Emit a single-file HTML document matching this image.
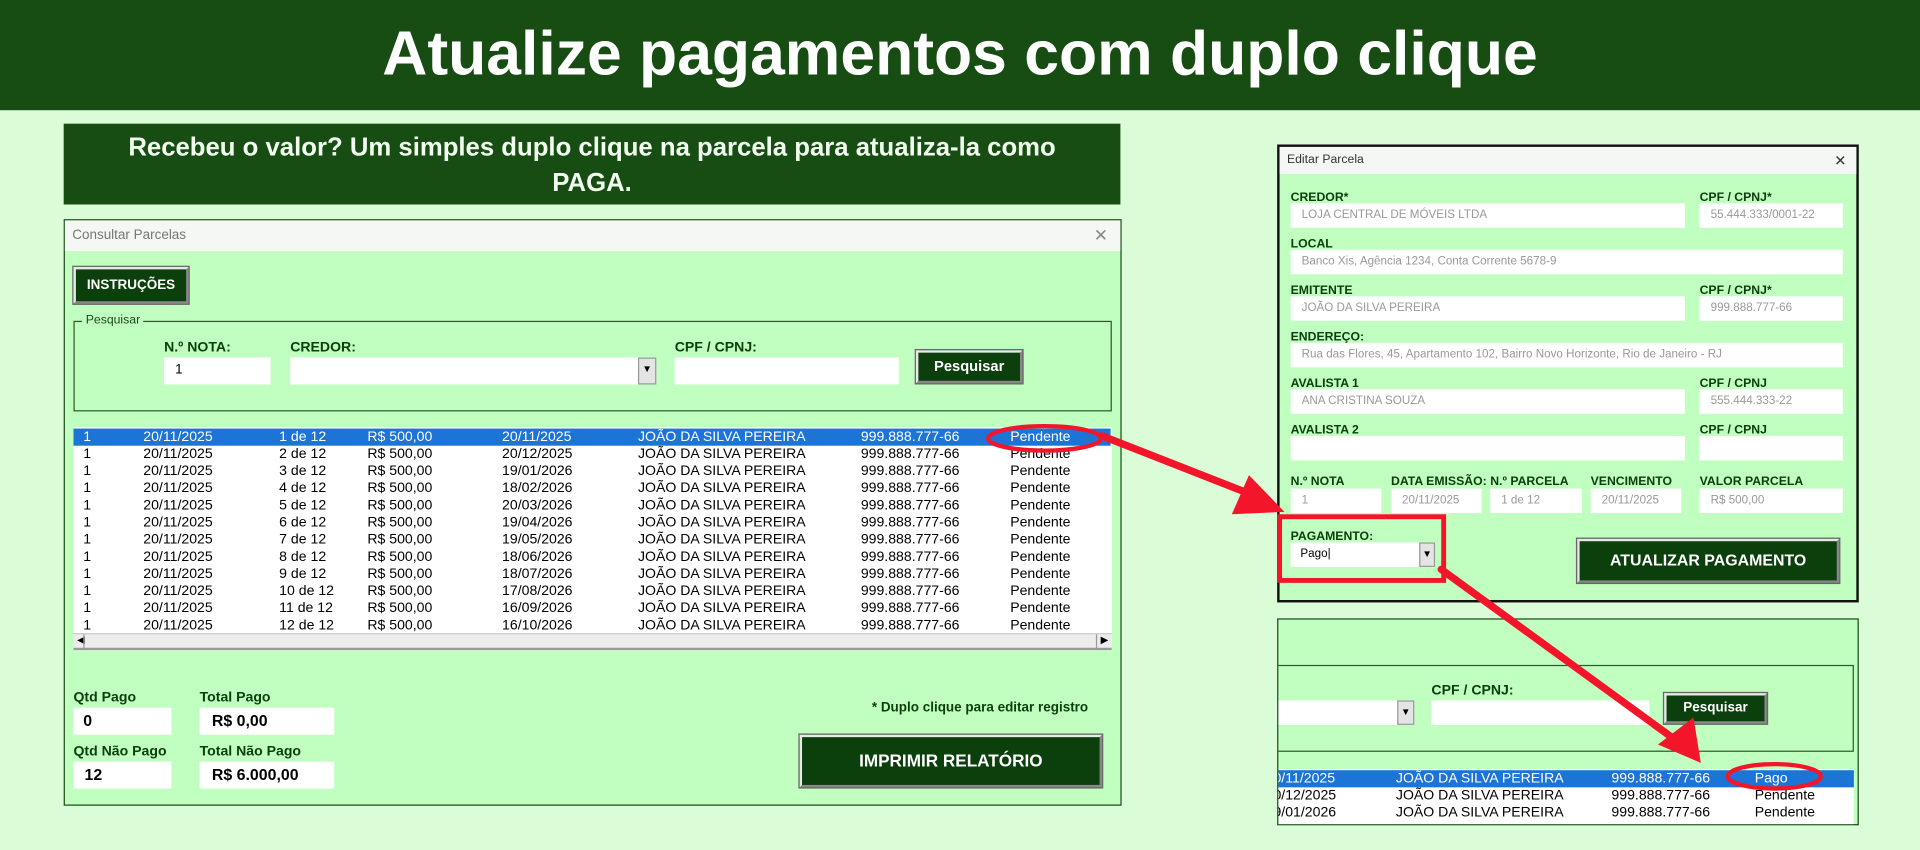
<!DOCTYPE html>
<html><head><meta charset="utf-8">
<style>
*{margin:0;padding:0;box-sizing:border-box}
html,body{width:1920px;height:850px;overflow:hidden;background:#dafcd7}
#r{position:absolute;left:0;top:0;width:1568px;height:694px;transform-origin:0 0;transform:scale(1.22449);font-family:"Liberation Sans",sans-serif}
.a{position:absolute}
.hdr{left:0;top:0;width:1568px;height:90px;background:#174d13;color:#fff;font-weight:bold;font-size:51px;text-align:center;line-height:88px}
.sub{left:52px;top:101px;width:863px;height:66px;background:#174d13;color:#f2fff0;font-weight:bold;font-size:21px;text-align:center;line-height:29px;padding-top:5px}
.frm{border:1px solid #1d4a1a;background:#c0ffc0}
.tb{position:absolute;left:0;top:0;right:0;background:#f4f7f4;color:#777;font-size:11px;padding-left:6px}
.lbl{position:absolute;color:#0c3d0c;font-weight:bold;font-size:11.5px;white-space:nowrap}
.in{position:absolute;background:#fff}
.btn{position:absolute;background:#0b3f0b;color:#fff;font-weight:bold;text-align:center;border:2px solid #e8e8e8;border-right-color:#888;border-bottom-color:#888;outline:1px solid #666}
.dd{position:absolute;background:#e4e4e4;border:1px solid #999;font-size:8px;text-align:center;line-height:18px}
.g{color:#999;font-size:9.5px;padding:4px 0 0 9px;white-space:nowrap}
.row{position:absolute;left:0;width:847px;height:14px;font-size:11.5px;line-height:15px;color:#000;white-space:nowrap}
.row span{position:absolute;top:0}
</style></head><body><div id="r">
<div class="a hdr">Atualize pagamentos com duplo clique</div>
<div class="a sub">Recebeu o valor? Um simples duplo clique na parcela para atualiza-la como<br>PAGA.</div>

<div class="a frm" style="left:52px;top:179px;width:864px;height:479px">
 <div class="tb" style="height:25px;line-height:25px">Consultar Parcelas<span style="position:absolute;right:10px;font-size:14px;color:#888">✕</span></div>
 <div class="btn" style="left:7px;top:38px;width:94px;height:30px;font-size:11px;line-height:26px">INSTRUÇÕES</div>
 <div class="a" style="left:7px;top:82px;width:848px;height:74px;border:1px solid #2e5a2a"></div>
 <div class="a" style="left:14px;top:76px;background:#c0ffc0;font-size:10px;color:#1b4a1b;padding:0 3px">Pesquisar</div>
 <div class="lbl" style="left:81px;top:98px">N.º NOTA:</div>
 <div class="in" style="left:81px;top:112px;width:87px;height:22px;font-size:11px;padding:4px 0 0 9px">1</div>
 <div class="lbl" style="left:184px;top:98px">CREDOR:</div>
 <div class="in" style="left:184px;top:112px;width:299px;height:22px"></div>
 <div class="dd" style="left:468px;top:112px;width:15px;height:22px">▼</div>
 <div class="lbl" style="left:498px;top:98px">CPF / CPNJ:</div>
 <div class="in" style="left:498px;top:112px;width:183px;height:22px"></div>
 <div class="btn" style="left:695px;top:106px;width:87px;height:27px;font-size:12px;line-height:23px">Pesquisar</div>
 <div class="lbl" style="left:7px;top:384px">Qtd Pago</div>
 <div class="in" style="left:7px;top:398px;width:80px;height:22px;font-weight:bold;font-size:13px;padding:3px 0 0 8px">0</div>
 <div class="lbl" style="left:110px;top:384px">Total Pago</div>
 <div class="in" style="left:110px;top:398px;width:110px;height:22px;font-weight:bold;font-size:13px;padding:3px 0 0 10px">R$ 0,00</div>
 <div class="lbl" style="left:7px;top:428px">Qtd Não Pago</div>
 <div class="in" style="left:7px;top:442px;width:80px;height:22px;font-weight:bold;font-size:13px;padding:3px 0 0 9px">12</div>
 <div class="lbl" style="left:110px;top:428px">Total Não Pago</div>
 <div class="in" style="left:110px;top:442px;width:110px;height:22px;font-weight:bold;font-size:13px;padding:3px 0 0 10px">R$ 6.000,00</div>
 <div class="lbl" style="left:659px;top:392px;font-size:11px">* Duplo clique para editar registro</div>
 <div class="btn" style="left:600px;top:420px;width:247px;height:43px;font-size:14px;line-height:39px">IMPRIMIR RELATÓRIO</div>
</div>

<div class="a" style="left:60px;top:349px;width:848px;height:182px;background:#fff;overflow:hidden">
<div class="row" style="top:1px;background:#1c74d6;color:#fff"><span style="left:8px">1</span><span style="left:57px">20/11/2025</span><span style="left:168px">1 de 12</span><span style="left:240px">R$ 500,00</span><span style="left:350px">20/11/2025</span><span style="left:461px">JOÃO DA SILVA PEREIRA</span><span style="left:643px">999.888.777-66</span><span style="left:765px">Pendente</span></div>
<div class="row" style="top:15px"><span style="left:8px">1</span><span style="left:57px">20/11/2025</span><span style="left:168px">2 de 12</span><span style="left:240px">R$ 500,00</span><span style="left:350px">20/12/2025</span><span style="left:461px">JOÃO DA SILVA PEREIRA</span><span style="left:643px">999.888.777-66</span><span style="left:765px">Pendente</span></div>
<div class="row" style="top:29px"><span style="left:8px">1</span><span style="left:57px">20/11/2025</span><span style="left:168px">3 de 12</span><span style="left:240px">R$ 500,00</span><span style="left:350px">19/01/2026</span><span style="left:461px">JOÃO DA SILVA PEREIRA</span><span style="left:643px">999.888.777-66</span><span style="left:765px">Pendente</span></div>
<div class="row" style="top:43px"><span style="left:8px">1</span><span style="left:57px">20/11/2025</span><span style="left:168px">4 de 12</span><span style="left:240px">R$ 500,00</span><span style="left:350px">18/02/2026</span><span style="left:461px">JOÃO DA SILVA PEREIRA</span><span style="left:643px">999.888.777-66</span><span style="left:765px">Pendente</span></div>
<div class="row" style="top:57px"><span style="left:8px">1</span><span style="left:57px">20/11/2025</span><span style="left:168px">5 de 12</span><span style="left:240px">R$ 500,00</span><span style="left:350px">20/03/2026</span><span style="left:461px">JOÃO DA SILVA PEREIRA</span><span style="left:643px">999.888.777-66</span><span style="left:765px">Pendente</span></div>
<div class="row" style="top:71px"><span style="left:8px">1</span><span style="left:57px">20/11/2025</span><span style="left:168px">6 de 12</span><span style="left:240px">R$ 500,00</span><span style="left:350px">19/04/2026</span><span style="left:461px">JOÃO DA SILVA PEREIRA</span><span style="left:643px">999.888.777-66</span><span style="left:765px">Pendente</span></div>
<div class="row" style="top:85px"><span style="left:8px">1</span><span style="left:57px">20/11/2025</span><span style="left:168px">7 de 12</span><span style="left:240px">R$ 500,00</span><span style="left:350px">19/05/2026</span><span style="left:461px">JOÃO DA SILVA PEREIRA</span><span style="left:643px">999.888.777-66</span><span style="left:765px">Pendente</span></div>
<div class="row" style="top:99px"><span style="left:8px">1</span><span style="left:57px">20/11/2025</span><span style="left:168px">8 de 12</span><span style="left:240px">R$ 500,00</span><span style="left:350px">18/06/2026</span><span style="left:461px">JOÃO DA SILVA PEREIRA</span><span style="left:643px">999.888.777-66</span><span style="left:765px">Pendente</span></div>
<div class="row" style="top:113px"><span style="left:8px">1</span><span style="left:57px">20/11/2025</span><span style="left:168px">9 de 12</span><span style="left:240px">R$ 500,00</span><span style="left:350px">18/07/2026</span><span style="left:461px">JOÃO DA SILVA PEREIRA</span><span style="left:643px">999.888.777-66</span><span style="left:765px">Pendente</span></div>
<div class="row" style="top:127px"><span style="left:8px">1</span><span style="left:57px">20/11/2025</span><span style="left:168px">10 de 12</span><span style="left:240px">R$ 500,00</span><span style="left:350px">17/08/2026</span><span style="left:461px">JOÃO DA SILVA PEREIRA</span><span style="left:643px">999.888.777-66</span><span style="left:765px">Pendente</span></div>
<div class="row" style="top:141px"><span style="left:8px">1</span><span style="left:57px">20/11/2025</span><span style="left:168px">11 de 12</span><span style="left:240px">R$ 500,00</span><span style="left:350px">16/09/2026</span><span style="left:461px">JOÃO DA SILVA PEREIRA</span><span style="left:643px">999.888.777-66</span><span style="left:765px">Pendente</span></div>
<div class="row" style="top:155px"><span style="left:8px">1</span><span style="left:57px">20/11/2025</span><span style="left:168px">12 de 12</span><span style="left:240px">R$ 500,00</span><span style="left:350px">16/10/2026</span><span style="left:461px">JOÃO DA SILVA PEREIRA</span><span style="left:643px">999.888.777-66</span><span style="left:765px">Pendente</span></div>
<div class="a" style="left:0;top:168px;width:848px;height:14px;background:#ececec;border-top:1px solid #ccc;border-bottom:2px solid #999"><span style="position:absolute;left:3px;top:0;font-size:8px">◀</span><span style="position:absolute;left:8px;top:0;width:1px;height:12px;background:#999"></span><span style="position:absolute;right:3px;top:0;font-size:8px">▶</span><span style="position:absolute;right:12px;top:0;width:1px;height:12px;background:#999"></span></div>
</div>

<div class="a frm" style="left:1043px;top:118px;width:475px;height:374px;border:2px solid #111">
 <div class="tb" style="height:22px;line-height:22px;color:#333;font-size:10px">Editar Parcela<span style="position:absolute;right:8px;font-size:12px;color:#333">✕</span></div>
 <div class="lbl" style="left:9px;top:36px;font-size:10px">CREDOR*</div>
 <div class="in g" style="left:9px;top:46px;width:322px;height:20px">LOJA CENTRAL DE MÓVEIS LTDA</div>
 <div class="lbl" style="left:343px;top:36px;font-size:10px">CPF / CPNJ*</div>
 <div class="in g" style="left:343px;top:46px;width:117px;height:20px">55.444.333/0001-22</div>
 <div class="lbl" style="left:9px;top:74px;font-size:10px">LOCAL</div>
 <div class="in g" style="left:9px;top:84px;width:451px;height:20px">Banco Xis, Agência 1234, Conta Corrente 5678-9</div>
 <div class="lbl" style="left:9px;top:112px;font-size:10px">EMITENTE</div>
 <div class="in g" style="left:9px;top:122px;width:322px;height:20px">JOÃO DA SILVA PEREIRA</div>
 <div class="lbl" style="left:343px;top:112px;font-size:10px">CPF / CPNJ*</div>
 <div class="in g" style="left:343px;top:122px;width:117px;height:20px">999.888.777-66</div>
 <div class="lbl" style="left:9px;top:150px;font-size:10px">ENDEREÇO:</div>
 <div class="in g" style="left:9px;top:160px;width:451px;height:20px">Rua das Flores, 45, Apartamento 102, Bairro Novo Horizonte, Rio de Janeiro - RJ</div>
 <div class="lbl" style="left:9px;top:188px;font-size:10px">AVALISTA 1</div>
 <div class="in g" style="left:9px;top:198px;width:322px;height:20px">ANA CRISTINA SOUZA</div>
 <div class="lbl" style="left:343px;top:188px;font-size:10px">CPF / CPNJ</div>
 <div class="in g" style="left:343px;top:198px;width:117px;height:20px">555.444.333-22</div>
 <div class="lbl" style="left:9px;top:226px;font-size:10px">AVALISTA 2</div>
 <div class="in" style="left:9px;top:236px;width:322px;height:20px"></div>
 <div class="lbl" style="left:343px;top:226px;font-size:10px">CPF / CPNJ</div>
 <div class="in" style="left:343px;top:236px;width:117px;height:20px"></div>
 <div class="lbl" style="left:9px;top:268px;font-size:10px">N.º NOTA</div>
 <div class="in g" style="left:9px;top:279px;width:74px;height:20px">1</div>
 <div class="lbl" style="left:91px;top:268px;font-size:10px">DATA EMISSÃO:</div>
 <div class="in g" style="left:91px;top:279px;width:74px;height:20px">20/11/2025</div>
 <div class="lbl" style="left:172px;top:268px;font-size:10px">N.º PARCELA</div>
 <div class="in g" style="left:172px;top:279px;width:75px;height:20px">1 de 12</div>
 <div class="lbl" style="left:254px;top:268px;font-size:10px">VENCIMENTO</div>
 <div class="in g" style="left:254px;top:279px;width:74px;height:20px">20/11/2025</div>
 <div class="lbl" style="left:343px;top:268px;font-size:10px">VALOR PARCELA</div>
 <div class="in g" style="left:343px;top:279px;width:117px;height:20px">R$ 500,00</div>
 <div class="lbl" style="left:9px;top:313px;font-size:10px">PAGAMENTO:</div>
 <div class="in" style="left:9px;top:323px;width:118px;height:20px;font-size:9.5px;padding:4px 0 0 8px">Pago|</div>
 <div class="dd" style="left:114px;top:323px;width:13px;height:20px">▼</div>
 <div class="btn" style="left:243px;top:320px;width:214px;height:36px;font-size:13px;line-height:32px">ATUALIZAR PAGAMENTO</div>
</div>

<div class="a frm" style="left:1043px;top:505px;width:475px;height:169px;border:1px solid #1d4a1a;overflow:hidden">
 <div class="a" style="left:-10px;top:37px;width:480px;height:71px;border:1px solid #2e5a2a"></div>
 <div class="in" style="left:0;top:66px;width:111px;height:20px"></div>
 <div class="dd" style="left:97px;top:66px;width:14px;height:20px">▼</div>
 <div class="lbl" style="left:125px;top:52px;font-size:11.5px">CPF / CPNJ:</div>
 <div class="in" style="left:125px;top:66px;width:178px;height:20px"></div>
 <div class="btn" style="left:315px;top:60px;width:84px;height:25px;font-size:11px;line-height:21px">Pesquisar</div>
 <div class="a" style="left:0;top:122px;width:470px;height:47px;background:#fff"></div>
 <div class="row" style="top:123px;width:470px;background:#1c74d6;color:#fff"><span style="left:-4px">0/11/2025</span><span style="left:96px">JOÃO DA SILVA PEREIRA</span><span style="left:272px">999.888.777-66</span><span style="left:389px">Pago</span></div>
 <div class="row" style="top:137px;width:470px"><span style="left:-4px">0/12/2025</span><span style="left:96px">JOÃO DA SILVA PEREIRA</span><span style="left:272px">999.888.777-66</span><span style="left:389px">Pendente</span></div>
 <div class="row" style="top:151px;width:470px"><span style="left:-4px">9/01/2026</span><span style="left:96px">JOÃO DA SILVA PEREIRA</span><span style="left:272px">999.888.777-66</span><span style="left:389px">Pendente</span></div>
</div>

<svg class="a" style="left:0;top:0" width="1568" height="694" viewBox="0 0 1568 694">
 <g fill="none" stroke="#f3162a" stroke-width="3.5">
  <ellipse cx="853" cy="358" rx="46" ry="10"/>
  <ellipse cx="1449" cy="634" rx="38" ry="10"/>
  <rect x="1045" y="422" width="134" height="52" stroke-width="4"/>
 </g>
 <g stroke="#f3162a" stroke-width="6" stroke-linecap="round">
  <line x1="900" y1="356" x2="1025" y2="405"/>
  <line x1="1177" y1="465" x2="1372" y2="607"/>
 </g>
 <polygon points="1049,418 1020,388 1006,420" fill="#f3162a"/>
 <polygon points="1389,623 1383,586 1354,608" fill="#f3162a"/>
</svg>
</div></body></html>
